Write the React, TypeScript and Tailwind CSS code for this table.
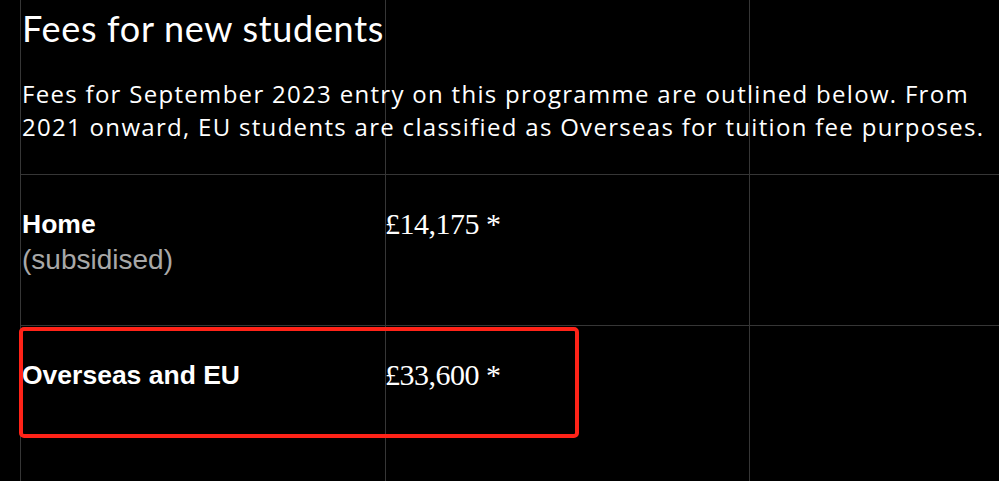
const GUIDES = [20, 385, 749];

const FEES = [
  { label: "Home", note: "(subsidised)", amount: "£14,175 *" },
  { label: "Overseas and EU", note: null, amount: "£33,600 *" },
];

export default function App() {
  return (
    <div className="relative h-[481px] w-[999px] overflow-hidden bg-black text-white">
      {/* column guides */}
      {GUIDES.map((x) => (
        <div
          key={x}
          className="pointer-events-none absolute top-0 bottom-0 w-px bg-[#363636]"
          style={{ left: x }}
        />
      ))}

      <div className="relative ml-[20px]">
        <h2 className="pt-[6px] pl-[2px] font-['Lato',sans-serif] text-[36px] leading-[44px] font-normal tracking-[0.7px]">
          Fees for new students
        </h2>
        <p className="mt-[27px] pl-[2px] pr-[10px] font-['Open_Sans',sans-serif] text-[24px] leading-[33px] tracking-[1.3px]">
          Fees for September 2023 entry on this programme are outlined below. From 2021 onward, EU
          students are classified as Overseas for tuition fee purposes.
        </p>

        <div className="mt-[31px]">
          {FEES.map((fee, i) => (
            <div
              key={fee.label}
              className={`grid grid-cols-[365px_1fr] border-t border-[#363636] pt-[31px] ${
                i === 0 ? "h-[151px]" : "h-[160px]"
              }`}
            >
              <div className="pl-[2px] font-['Liberation_Sans',Arial,sans-serif] leading-[36px]">
                <div className="text-[26.5px] font-bold">{fee.label}</div>
                {fee.note && <div className="text-[28px] text-[#a8a8a8]">{fee.note}</div>}
              </div>
              <div className="font-['Liberation_Serif','Times_New_Roman',serif] text-[30px] leading-[36px] tracking-[-0.5px]">
                {fee.amount}
              </div>
            </div>
          ))}
        </div>
      </div>

      {/* annotation box */}
      <div className="pointer-events-none absolute top-[327px] left-[19px] h-[111px] w-[560px] rounded-[5px] border-[4px] border-[#ff2318]" />
    </div>
  );
}
